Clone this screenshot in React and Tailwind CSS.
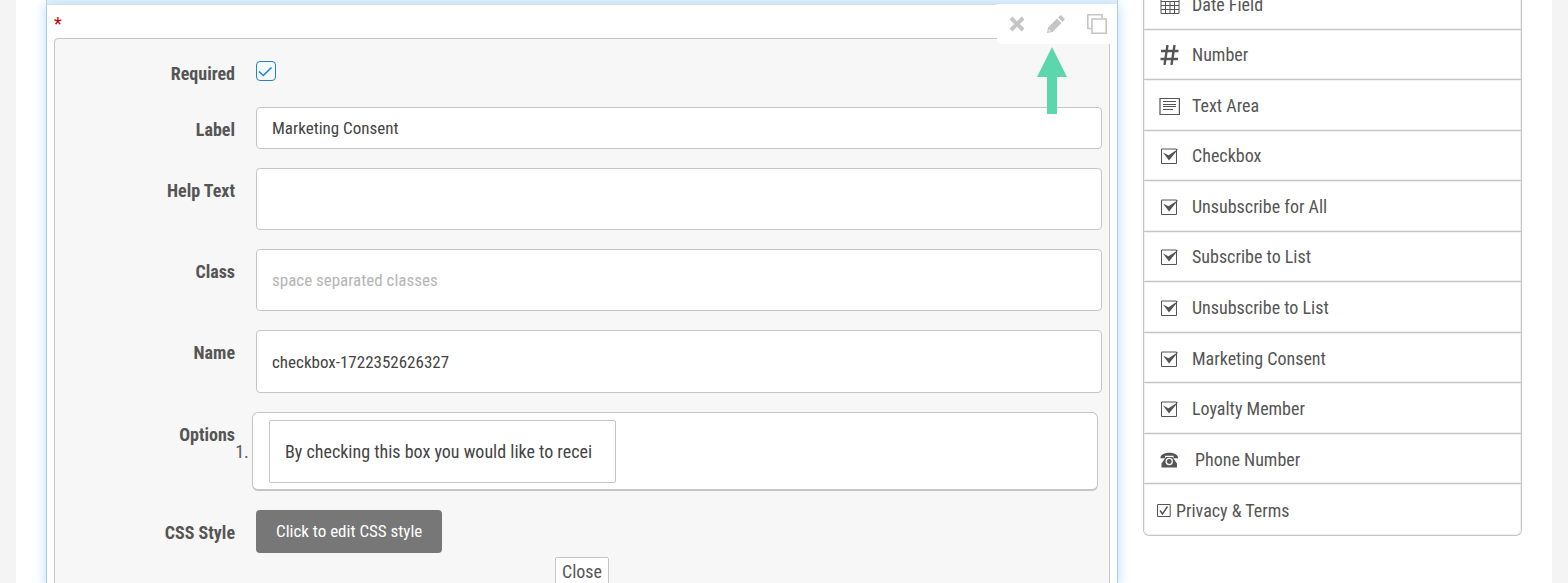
import { useState } from 'react';

const FIELDS = [
  { label: 'Date Field', icon: 'date' },
  { label: 'Number', icon: 'number' },
  { label: 'Text Area', icon: 'textarea' },
  { label: 'Checkbox', icon: 'check' },
  { label: 'Unsubscribe for All', icon: 'check' },
  { label: 'Subscribe to List', icon: 'check' },
  { label: 'Unsubscribe to List', icon: 'check' },
  { label: 'Marketing Consent', icon: 'check' },
  { label: 'Loyalty Member', icon: 'check' },
  { label: 'Phone Number', icon: 'phone' },
  { label: 'Privacy & Terms', icon: 'privacy' },
];

const inputClass =
  'block w-full rounded border border-[#c5c5c5] bg-white px-[15px] text-[17px] text-[#444] placeholder:text-[#b5b5b5] outline-none';

export default function App() {
  const [values, setValues] = useState({
    required: true,
    label: 'Marketing Consent',
    help: '',
    className: '',
    name: 'checkbox-1722352626327',
    option: 'By checking this box you would like to recei',
  });

  const set = (key) => (e) => setValues({ ...values, [key]: e.target.value });

  return (
    <div className="h-screen overflow-hidden bg-[#f4f4f4] px-4 font-['Roboto_Condensed','Liberation_Sans_Narrow',Roboto,sans-serif] text-lg text-[#555]">
      <div className="flex h-full items-start gap-[25px] bg-white px-[30px]">
        <main className="relative min-w-0 flex-1">
          <div className="h-1 border-x border-[#c5c5d5] bg-[#e6f2fb]" />
          <section className="border-x border-t border-x-[#a9cbe6] border-t-[#dcdcdc] bg-white px-[7px] shadow-[0_0_12px_#b5dcfa]">
            <div className="h-[33px] pt-2 text-lg leading-[22px] text-[#c10000]">*</div>
            <form
              className="flex flex-col gap-[19px] rounded-t border border-[#c5c5c5] bg-[#f7f7f7] pt-3"
              onSubmit={(e) => e.preventDefault()}
            >
              <Row label="Required" htmlFor="required">
                <div className="relative mt-[10px] h-[27px]">
                  <input
                    id="required"
                    type="checkbox"
                    className="block h-5 w-5 appearance-none rounded border border-[#2b7fc4] bg-[#f2faff]"
                    checked={values.required}
                    onChange={(e) => setValues({ ...values, required: e.target.checked })}
                  />
                  {values.required ? (
                    <svg className="pointer-events-none absolute top-0 left-0 h-5 w-5" viewBox="0 0 20 20" fill="none">
                      <path d="M3 10.5 7.3 14.5 15.5 6.5" stroke="#2b7fc4" strokeWidth="1.6" />
                    </svg>
                  ) : null}
                </div>
              </Row>
              <Row label="Label" htmlFor="label">
                <input id="label" className={`${inputClass} h-[42px]`} value={values.label} onChange={set('label')} />
              </Row>
              <Row label="Help Text" htmlFor="help">
                <input id="help" className={`${inputClass} h-[62px]`} value={values.help} onChange={set('help')} />
              </Row>
              <Row label="Class" htmlFor="class">
                <input
                  id="class"
                  className={`${inputClass} h-[62px]`}
                  placeholder="space separated classes"
                  value={values.className}
                  onChange={set('className')}
                />
              </Row>
              <Row label="Name" htmlFor="name">
                <input id="name" className={`${inputClass} h-[63px]`} value={values.name} onChange={set('name')} />
              </Row>
              <Row label="Options" htmlFor="option">
                <ol className="mr-1 -ml-1 h-[79px] list-outside list-decimal rounded-md border border-b-2 border-[#c5c5c5] bg-white px-4 pt-[7px]">
                  <li className="-ml-4 pl-4">
                    <input
                      id="option"
                      className="h-[63px] w-[347px] rounded-xs border border-[#c5c5c5] bg-white px-[15px] text-lg text-[#444] outline-none"
                      value={values.option}
                      onChange={set('option')}
                    />
                  </li>
                </ol>
              </Row>
              <Row label="CSS Style" htmlFor="css-style">
                <button
                  id="css-style"
                  type="button"
                  className="block h-[43px] rounded bg-[#777] px-5 text-[17px] text-white"
                >
                  Click to edit CSS style
                </button>
              </Row>
              <button
                type="button"
                className="-mt-[15px] self-center rounded-xs border border-[#c5c5c5] bg-white px-[6px] text-lg"
              >
                Close
              </button>
            </form>
          </section>

          <div className="absolute top-1 right-px flex h-10 w-[120px] items-center gap-[22px] rounded-bl-md bg-white pl-3 text-[#c5c5c5]">
            <button type="button" aria-label="Remove" className="h-4 w-4">
              <svg viewBox="0 0 16 16" className="h-4 w-4" stroke="currentColor" strokeWidth="4">
                <path d="M2 2 14 14M14 2 2 14" />
              </svg>
            </button>
            <button type="button" aria-label="Edit" className="h-[18px] w-[18px]">
              <PencilIcon />
            </button>
            <button type="button" aria-label="Copy" className="h-5 w-5">
              <svg viewBox="0 0 20 20" className="h-5 w-5" fill="none" stroke="currentColor" strokeWidth="1.6">
                <path d="M4.5 14.5H.8V.8H15V4" />
                <path d="M5 5H19.2V19.2H5Z" />
              </svg>
            </button>
          </div>

          <svg className="absolute top-[47px] right-[51px] h-[67px] w-[30px]" viewBox="0 0 30 67" fill="#5cd6ad">
            <path d="M15 0 30 30H20V67H10V30H0Z" />
          </svg>
        </main>

        <ul className="-mt-[21px] grid h-[557px] w-[379px] shrink-0 auto-rows-fr rounded-b-md border border-t-0 border-[#c5c5c5]">
          {FIELDS.map((field) => (
            <FieldItem key={field.label} {...field} />
          ))}
        </ul>
      </div>
    </div>
  );
}

function Row({ label, htmlFor, children }) {
  return (
    <div className="flex items-start gap-[21px] pr-[7px]">
      <label htmlFor={htmlFor} className="w-[180px] shrink-0 pt-3 text-right leading-[22px] font-bold">
        {label}
      </label>
      <div className="min-w-0 flex-1">{children}</div>
    </div>
  );
}

function FieldItem({ label, icon }) {
  if (icon === 'privacy') {
    return (
      <li className="flex items-center gap-[5px] rounded-b-md pt-0.5 pl-3 shadow-[inset_0_0_0_1px_#f0f0f0]">
        <FieldIcon icon={icon} />
        {label}
      </li>
    );
  }
  return (
    <li className="flex items-center border-b border-[#c5c5c5] pt-0.5 pl-[15px] shadow-[inset_0_0_0_1px_#f0f0f0]">
      <FieldIcon icon={icon} />
      <span className={icon === 'phone' ? 'ml-[15px]' : 'ml-3'}>{label}</span>
    </li>
  );
}

function FieldIcon({ icon }) {
  if (icon === 'date') {
    return (
      <svg className="h-5 w-[21px]" viewBox="0 0 21 20" fill="none" stroke="currentColor">
        <path d="M2 3.5H20V18.5H2Z" />
        <path d="M2 6.5H20M2 10.5H20M2 14.5H20M6.5 6V18M11 6V18M15.5 6V18" />
      </svg>
    );
  }
  if (icon === 'number') {
    return (
      <svg className="h-5 w-[21px]" viewBox="0 0 21 20" fill="none" stroke="currentColor" strokeWidth="2.4">
        <path d="M8.500 0 5.500 20M15.500 0 12.500 20M2 6H19.500M1.500 14H19" />
      </svg>
    );
  }
  if (icon === 'textarea') {
    return (
      <svg className="h-5 w-[21px]" viewBox="0 0 21 20" fill="none" stroke="currentColor" strokeWidth="1.2">
        <path d="M1 2.500H20.400V18.500H1Z" />
        <path d="M4 5.500H17M4 8.500H17M4 10.500H17M4 13.500H14" />
      </svg>
    );
  }
  if (icon === 'phone') {
    return (
      <svg className="h-5 w-[21px]" viewBox="0 0 21 20" fill="currentColor">
        <path d="M1.500 7.500C1.500 1 19 1 19 7.500V8.200H14.500V5.700H6V8.200H1.500Z" />
        <path
          fillRule="evenodd"
          d="M7 7H13.500L18 13.500V17.500H2.500V13.500ZM10.250 7.800A3.700 3.700 0 1 0 10.250 15.200A3.700 3.700 0 1 0 10.250 7.800Z"
        />
        <circle cx="10.250" cy="11.500" r="2.400" />
      </svg>
    );
  }
  if (icon === 'privacy') {
    return (
      <svg className="h-[15px] w-[15px]" viewBox="0 0 15 15" fill="none" stroke="currentColor">
        <path d="M1.500 1.500H14.200V13.500H1.500Z" />
        <path d="M4 7.500 6.500 11 11.500 3.500" strokeWidth="1.500" />
      </svg>
    );
  }
  return (
    <svg className="h-5 w-[21px]" viewBox="0 0 21 20" fill="none" stroke="currentColor">
      <path d="M2.500 3H17.500V17.500H2.500Z" />
      <path d="M4 6.500 9.500 9.300 19.500 2.700 10 14.500Z" fill="currentColor" stroke="none" />
    </svg>
  );
}

function PencilIcon() {
  return (
    <svg viewBox="0 0 18 18" className="h-[18px] w-[18px]" fill="currentColor">
      <path
        fillRule="evenodd"
        d="M0 18 1 12.500 10 3.500 14.500 8 5.500 17ZM2 14.200 1.600 16.400 3.800 16Z"
      />
      <path d="M11 2.500 13 .5Q14 0 15 1L17 3Q18 4 17.500 5L15.500 7Z" />
    </svg>
  );
}
